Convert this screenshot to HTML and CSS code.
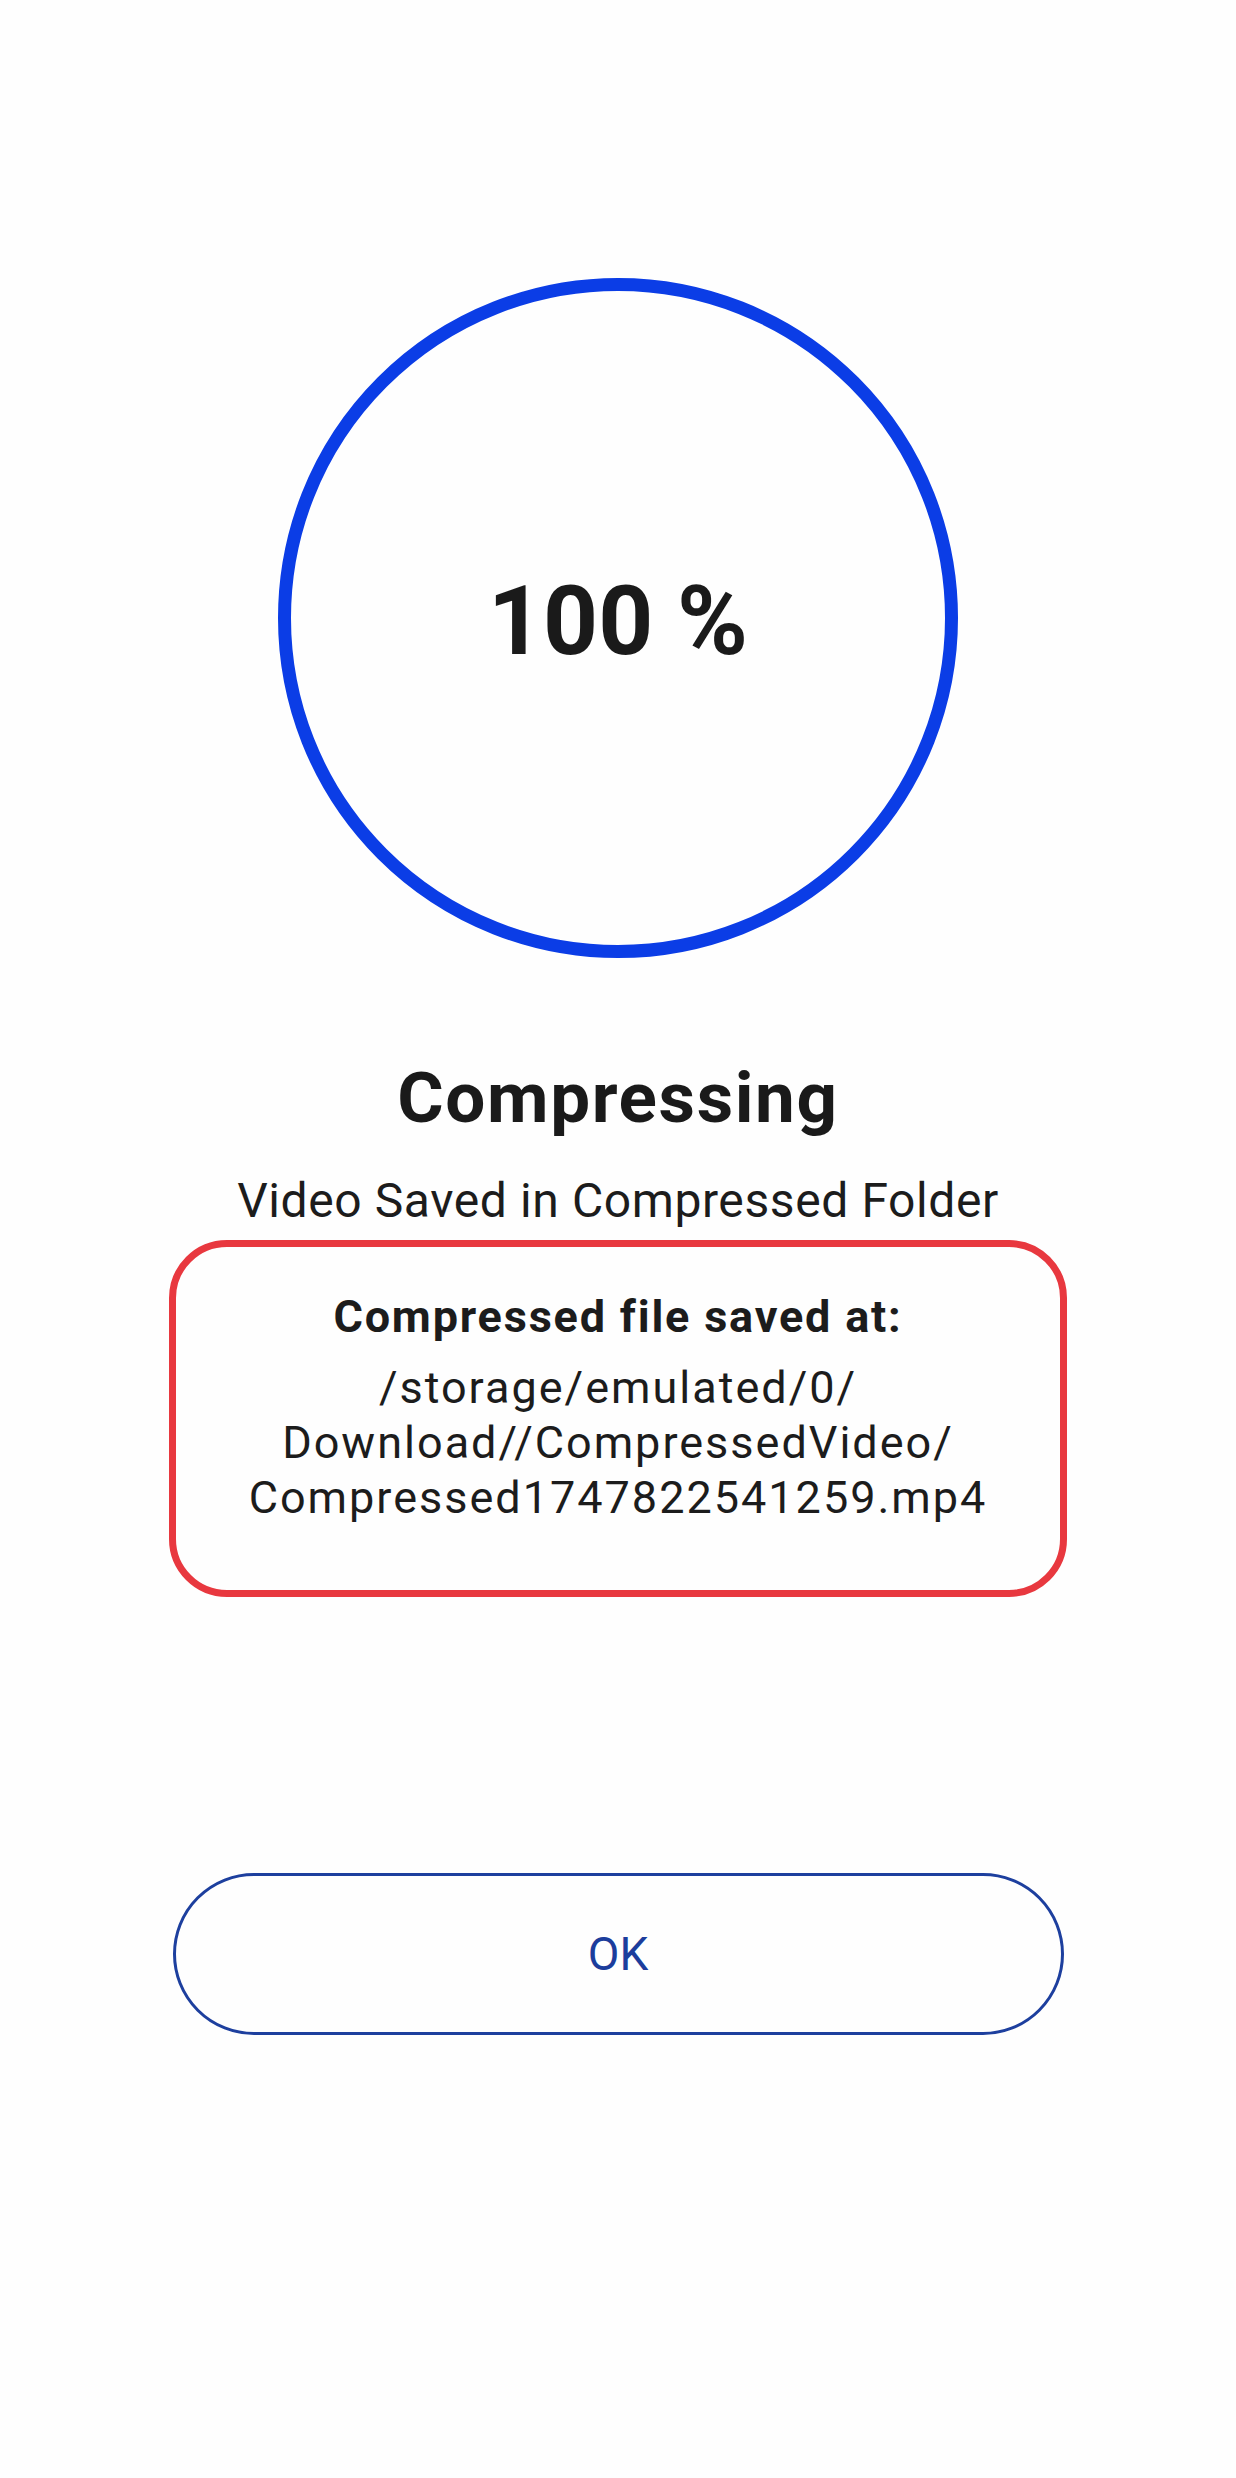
FILE: index.html
```html
<!DOCTYPE html>
<html lang="en">
<head>
<meta charset="utf-8">
<title>Compressing</title>
<link rel="stylesheet" href="styles.css">
</head>
<body>
<main class="screen">
  <div class="progress-ring">
    <span class="progress-value">100 %</span>
  </div>
  <h1 class="title">Compressing</h1>
  <p class="subtitle">Video Saved in Compressed Folder</p>
  <section class="path-box">
    <div class="path-label">Compressed file saved at:</div>
    <div class="path-text">/storage/emulated/0/<br>Download//CompressedVideo/<br>Compressed1747822541259.mp4</div>
  </section>
  <button class="ok-button" type="button">OK</button>
</main>
</body>
</html>
```
FILE: styles.css
```css
html, body {
  margin: 0;
  padding: 0;
  background: #fefefe;
}
body {
  font-family: Roboto, "Noto Sans", "Liberation Sans", sans-serif;
  color: #1c1c1c;
  width: 1236px;
  min-height: 2478px;
}
.screen {
  display: flex;
  flex-direction: column;
  align-items: center;
  padding-top: 278px;
}
.progress-ring {
  width: 680px;
  height: 680px;
  box-sizing: border-box;
  border: 13px solid #0b3de6;
  border-radius: 50%;
  display: flex;
  align-items: center;
  justify-content: center;
}
.progress-value {
  font-size: 96px;
  font-weight: 700;
  line-height: 1;
  color: #1a1a1a;
  margin-top: 6px;
}
.title {
  margin: 104px 0 0;
  font-size: 71px;
  font-weight: 700;
  line-height: 1;
  letter-spacing: 1.6px;
  color: #1a1a1a;
}
.subtitle {
  margin: 44px 0 0;
  font-size: 48px;
  font-weight: 400;
  line-height: 1;
  letter-spacing: 0.6px;
}
.path-box {
  margin-top: 15px;
  width: 898px;
  box-sizing: border-box;
  border: 7px solid #e8383f;
  border-radius: 58px;
  padding: 47px 10px 65px;
  text-align: center;
}
.path-label {
  font-size: 45px;
  font-weight: 700;
  line-height: 1;
  letter-spacing: 1.8px;
}
.path-text {
  margin-top: 21px;
  font-size: 45px;
  line-height: 55px;
  letter-spacing: 2px;
}
.ok-button {
  margin-top: 276px;
  width: 891px;
  height: 162px;
  box-sizing: border-box;
  border: 3px solid #1d3f9e;
  border-radius: 81px;
  background: #fefefe;
  font-family: Roboto, "Noto Sans", "Liberation Sans", sans-serif;
  font-size: 46px;
  color: #1c3d9c;
  padding: 0;
}
```
